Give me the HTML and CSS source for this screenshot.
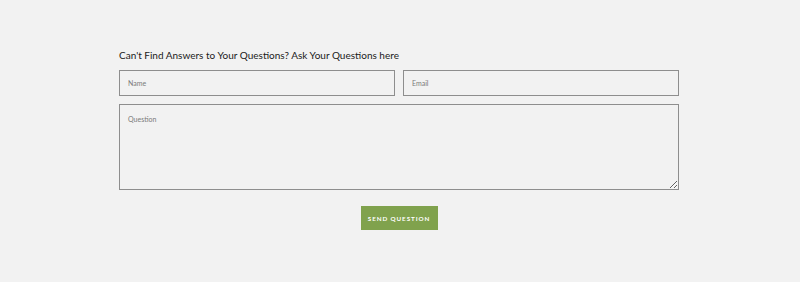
FILE: index.html
```html
<!DOCTYPE html>
<html lang="en">
<head>
  <meta charset="UTF-8">
  <meta name="viewport" content="width=device-width, initial-scale=1">
  <title>Ask Your Questions</title>
  <link rel="stylesheet" href="styles.css">
</head>
<body>
  <!-- Question form -->
  <div class="ask-container">
    <h2 class="ask-title">Can't Find Answers to Your Questions? Ask Your Questions here</h2>
    <form class="ask-form">
      <div class="ask-row">
        <input type="text" placeholder="Name">
        <input type="email" placeholder="Email">
      </div>
      <textarea placeholder="Question"></textarea>
      <div class="ask-actions">
        <button type="submit">Send Question</button>
      </div>
    </form>
  </div>
</body>
</html>
```

FILE: styles.css
```css
body {
  font-family: Lato, "Open Sans", sans-serif;
  background-color: #f2f2f2;
  margin: 0;
}
.ask-container {
  width: 560px;
  margin: 0 auto;
  padding-top: 49px;
  position: relative;
  left: -1px;
}
.ask-title {
  font-size: 10px;
  font-weight: 400;
  color: #1a1a1a;
  margin: 0 0 9px 0;
  line-height: 12px;
}
.ask-form {
  display: flex;
  flex-direction: column;
  gap: 8px;
}
.ask-row {
  display: flex;
  gap: 8px;
}
input, textarea {
  box-sizing: border-box;
  background-color: #f2f2f2;
  border: 1px solid #8e8e8e;
  border-radius: 0;
  font-family: Lato, sans-serif;
  font-size: 7px;
  color: #333;
  padding: 0 8px;
  margin: 0;
}
input {
  flex: 1;
  height: 26px;
}
textarea {
  display: block;
  width: 100%;
  height: 86px;
  padding-top: 10px;
  resize: vertical;
}
input::placeholder, textarea::placeholder {
  color: #7a7a7a;
}
.ask-actions {
  display: flex;
  justify-content: center;
  padding-top: 8px;
}
button {
  width: 77px;
  height: 24px;
  background-color: #80a24d;
  color: #fff;
  border: none;
  font-family: Lato, sans-serif;
  font-size: 6.3px;
  font-weight: 700;
  letter-spacing: 0.9px;
  text-transform: uppercase;
  cursor: pointer;
  padding: 0;
}
```
